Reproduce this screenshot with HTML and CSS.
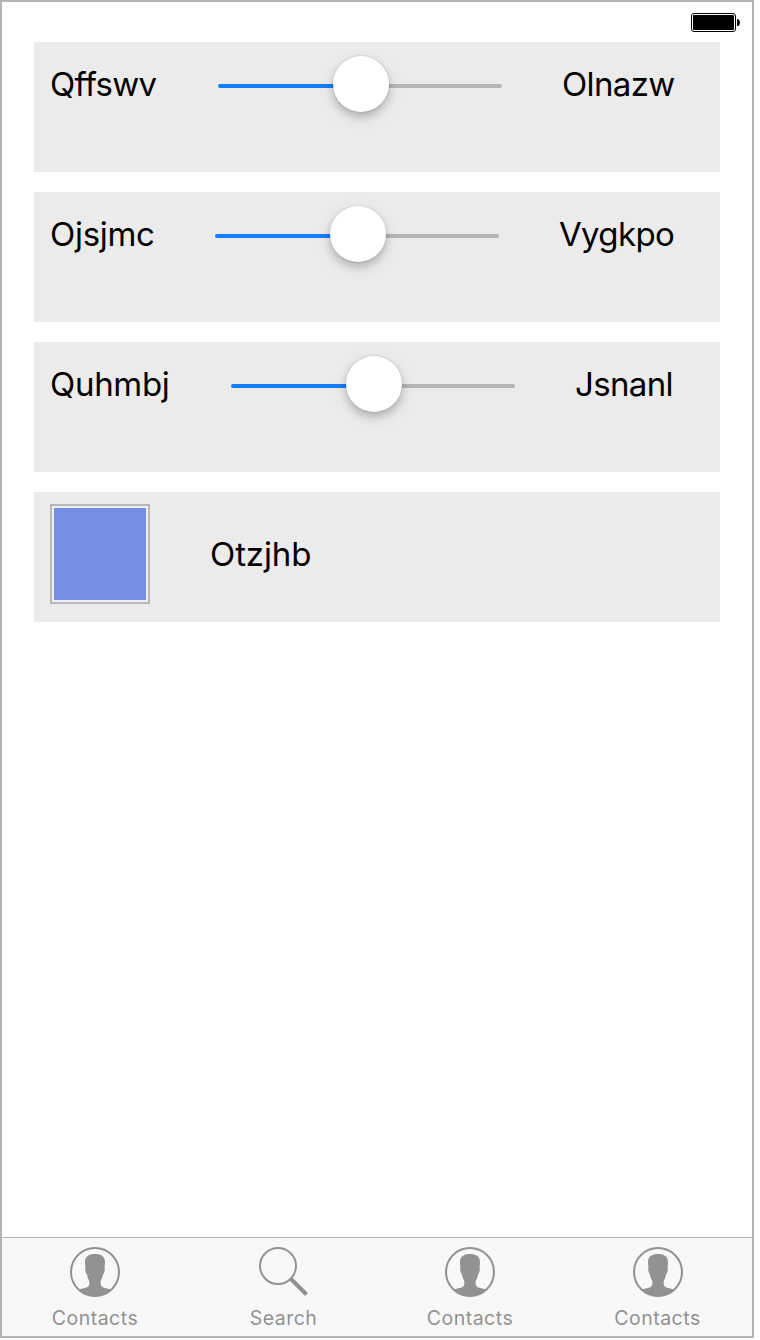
FILE: index.html
```html
<!DOCTYPE html>
<html lang="en">
<head>
<meta charset="utf-8">
<title>Settings</title>
<link rel="stylesheet" href="styles.css">
</head>
<body>
<svg class="symbols" width="0" height="0">
  <symbol id="contact" viewBox="0 0 50 50">
    <circle cx="25" cy="25" r="24" fill="none" stroke="currentColor" stroke-width="2"/>
    <path fill="currentColor" d="M25 7c-6 0-10 2.500-10 8 0 2 .2 4 .5 6-.6.8-.2 4 .8 5.500.5.500.7 1 .9 2 .4 2 1 3.500 1.800 4.500.5 2 .5 3.500 0 5.500-1 2.500-6 2.500-9.800 4A24 24 0 0 0 40.800 42.500C37 41 32 41 31 38.500c-.5-2-.5-3.500 0-5.500.8-1 1.400-2.500 1.800-4.500.2-1 .4-1.500.9-2 1-1.500 1.400-4.700.8-5.500.3-2 .5-4 .5-6 0-5.500-4-8-10-8z"/>
  </symbol>
  <symbol id="search" viewBox="0 0 50 50">
    <circle cx="19" cy="19" r="18" fill="none" stroke="currentColor" stroke-width="2"/>
    <path d="M32 32L47.500 47.500" fill="none" stroke="currentColor" stroke-width="4"/>
  </symbol>
</svg>
<div class="screen">
  <header class="status">
    <svg class="battery" width="50" height="19" viewBox="0 0 50 19">
      <rect x=".5" y=".5" width="44" height="18" rx="2.500" fill="none" stroke="#000"/>
      <rect x="2" y="2" width="41" height="15" rx="1" fill="#000"/>
      <path d="M46 6h1q2 1 2 3.500t-2 3.500h-1z" fill="#000"/>
    </svg>
  </header>
  <main class="rows">
    <section class="row">
      <span class="label w-qff">Qffswv</span>
      <div class="slider"><div class="thumb"></div></div>
      <span class="label w-oln">Olnazw</span>
    </section>
    <section class="row">
      <span class="label w-ojs">Ojsjmc</span>
      <div class="slider"><div class="thumb"></div></div>
      <span class="label w-vyg">Vygkpo</span>
    </section>
    <section class="row">
      <span class="label w-quh">Quhmbj</span>
      <div class="slider"><div class="thumb"></div></div>
      <span class="label w-jsn">Jsnanl</span>
    </section>
    <section class="row row-swatch">
      <div class="swatch"></div>
      <span class="label w-otz">Otzjhb</span>
    </section>
  </main>
  <nav class="tabs">
    <div class="tab"><svg class="icon"><use href="#contact"/></svg><span class="tab-name">Contacts</span></div>
    <div class="tab tab-search"><svg class="icon"><use href="#search"/></svg><span class="tab-name">Search</span></div>
    <div class="tab"><svg class="icon"><use href="#contact"/></svg><span class="tab-name">Contacts</span></div>
    <div class="tab"><svg class="icon"><use href="#contact"/></svg><span class="tab-name">Contacts</span></div>
  </nav>
</div>
</body>
</html>
```

FILE: styles.css
```css
* { box-sizing: border-box; }
body { margin: 0; background: #fff; font-family: Inter, "Liberation Sans", sans-serif; }
.symbols { display: none; }
.screen { width: 754px; height: 1338px; border: 2px solid #b3b3b3; display: flex; flex-direction: column; background: #fff; }
.status { height: 40px; padding: 11px 11px 0 0; display: flex; justify-content: flex-end; align-items: flex-start; }
.battery { display: block; }
.rows { flex: 1; padding: 0 32px; display: flex; flex-direction: column; gap: 20px; }
.row { height: 130px; padding: 12px 16px; background: #ebebeb; display: flex; align-items: flex-start; gap: 60px; }
.label { flex: none; height: 60px; line-height: 60px; font-size: 33px; color: #000; white-space: nowrap; letter-spacing: -0.5px; }
.w-qff { width: 108px; letter-spacing: -0.7px; }
.w-ojs { width: 105px; letter-spacing: -0.3px; }
.w-quh { width: 121px; letter-spacing: -0.3px; }
.w-oln, .w-vyg, .w-jsn { letter-spacing: -0.65px; }
.w-otz { letter-spacing: -0.1px; }
.slider { flex: none; width: 284px; height: 4px; margin-top: 30px; border-radius: 2px; background: linear-gradient(to right, #157efb 50%, #b6b6b6 50%); display: flex; justify-content: center; align-items: center; }
.thumb { flex: none; width: 56px; height: 56px; margin: -4px 0 0 2px; border-radius: 50%; background: #fff; box-shadow: 0 0 1px 1px rgba(0,0,0,.06), 0 5px 8px rgba(0,0,0,.2), 0 5px 18px rgba(0,0,0,.07); }
.row-swatch .label { margin-top: 20px; }
.swatch { width: 100px; height: 100px; padding: 2px; border: 2px solid #b8b8b8; background: #768fe2 content-box; box-shadow: inset 0 0 0 2px #edf0fa; }
.tabs { height: 99px; flex: none; border-top: 1px solid #b2b2b2; background: #f8f8f8; display: grid; grid-template-columns: repeat(4, 187.5px); color: #929292; }
.tab { padding: 9px 1.500px 0 0; display: flex; flex-direction: column; align-items: center; }
.tab-search { padding: 9px 0 0 0.500px; }
.icon { width: 50px; height: 50px; display: block; }
.tab-name { margin-top: 9px; font-size: 19.500px; line-height: 24px; letter-spacing: 0.5px; }
```
